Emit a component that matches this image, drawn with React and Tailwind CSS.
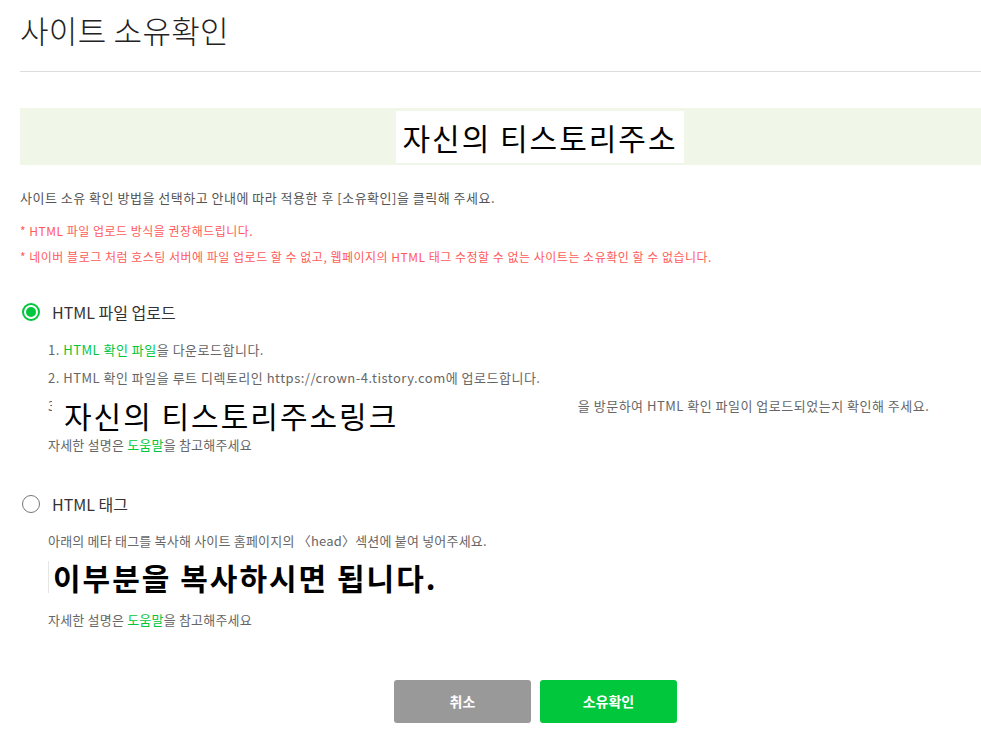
const FONT = { fontFamily: '"Noto Sans CJK KR", "Noto Sans", sans-serif' };

function Radio({ checked }) {
  return checked ? (
    <span className="flex h-[18px] w-[18px] items-center justify-center rounded-full border-2 border-[#00c73c]">
      <span className="h-[10px] w-[10px] rounded-full bg-[#00c73c]" />
    </span>
  ) : (
    <span className="h-[18px] w-[18px] rounded-full border-[1.5px] border-[#777]" />
  );
}

function HelpLine() {
  return (
    <p className="text-[13px] leading-[18px] tracking-[0.2px] text-[#666]">
      자세한 설명은 <span className="text-[#00c73c]">도움말</span>을 참고해주세요
    </p>
  );
}

export default function App() {
  return (
    <div className="min-h-[745px] bg-white pl-[20px]" style={FONT}>
      {/* ── Title ─────────────────────────────────── */}
      <div className="border-b border-[#ddd] pt-[7px] pb-[18px]">
        <h1 className="text-[31px] leading-[46px] font-light tracking-[0.3px] text-[#222]">사이트 소유확인</h1>
      </div>

      {/* ── Blog address banner ───────────────────── */}
      <div className="mt-[36px] flex h-[57px] items-start bg-[#f0f6e8] pt-[3px] pl-[376px]">
        <div className="flex h-[52px] w-[288px] items-center justify-center bg-white text-[30px] tracking-[2px] text-black">
          자신의 티스토리주소
        </div>
      </div>

      {/* ── Notice ────────────────────────────────── */}
      <p className="mt-[22px] text-[13px] leading-[22px] tracking-[0.5px] text-[#555]">
        사이트 소유 확인 방법을 선택하고 안내에 따라 적용한 후 [소유확인]을 클릭해 주세요.
      </p>
      <div className="mt-[13px] space-y-[8px] text-[12px] leading-[18px] tracking-[0.5px] text-[#ff5a5a]">
        <p>* HTML 파일 업로드 방식을 권장해드립니다.</p>
        <p>* 네이버 블로그 처럼 호스팅 서버에 파일 업로드 할 수 없고, 웹페이지의 HTML 태그 수정할 수 없는 사이트는 소유확인 할 수 없습니다.</p>
      </div>

      {/* ── Option 1: HTML file ───────────────────── */}
      <div className="mt-[34px] flex items-center gap-[12px] pl-[2px]">
        <Radio checked />
        <span className="text-[16px] leading-[24px] text-[#333]">HTML 파일 업로드</span>
      </div>
      <div className="mt-[12px] pl-[28px] text-[13px] leading-[28px] tracking-[0.5px] text-[#666]">
        <p>
          1. <span className="text-[#00c73c]">HTML 확인 파일</span>을 다운로드합니다.
        </p>
        <p>2. HTML 확인 파일을 루트 디렉토리인 https://crown-4.tistory.com에 업로드합니다.</p>
        <p className="relative">
          3.<span className="inline-block w-[518px]" />을 방문하여 HTML 확인 파일이 업로드되었는지 확인해 주세요.
          <span className="absolute left-[4px] top-[4px] flex h-[38px] w-[522px] items-center bg-white pl-[12px] text-[30px] leading-[38px] tracking-[2px] text-black">
            자신의 티스토리주소링크
          </span>
        </p>
        <div className="mt-[16px]">
          <HelpLine />
        </div>
      </div>

      {/* ── Option 2: HTML tag ────────────────────── */}
      <div className="mt-[38px] flex items-center gap-[12px] pl-[2px]">
        <Radio />
        <span className="text-[16px] leading-[24px] text-[#333]">HTML 태그</span>
      </div>
      <div className="mt-[15px] pl-[28px]">
        <p className="text-[13px] leading-[20px] tracking-[0.2px] text-[#666]">
          아래의 메타 태그를 복사해 사이트 홈페이지의 〈head〉섹션에 붙여 넣어주세요.
        </p>
        <div className="mt-[10px] flex h-[32px] items-center border-l border-[#e5e5e5] pl-[4px]">
          <span className="text-[30px] font-bold leading-[36px] tracking-[2px] text-black">이부분을 복사하시면 됩니다.</span>
        </div>
        <div className="mt-[18px]">
          <HelpLine />
        </div>
      </div>

      {/* ── Buttons ───────────────────────────────── */}
      <div className="mt-[51px] flex gap-[9px] pl-[374px]">
        <button className="h-[43px] w-[137px] rounded-[3px] bg-[#999] text-[14px] font-bold text-white">취소</button>
        <button className="h-[43px] w-[137px] rounded-[3px] bg-[#00c73c] text-[14px] font-bold text-white">소유확인</button>
      </div>
    </div>
  );
}
